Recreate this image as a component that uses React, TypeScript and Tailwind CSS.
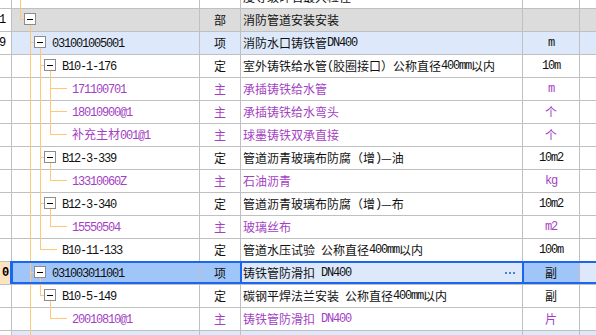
import React from "react";

type Tone = "plain" | "main" | "section" | "item" | "selected";

interface Row {
  num?: string;
  level: number;
  node: "box" | "leaf" | "none";
  guides: number[];
  parentLast?: boolean;
  code?: string;
  kind?: string;
  name?: string;
  unit?: string;
  tone: Tone;
}

const rows: Row[] = [
  { level: -1, node: "none", guides: [-1], name: "度等级碎石最大粒径16mm C30", tone: "plain" },
  { num: "1", level: 0, node: "box", guides: [], parentLast: true, kind: "部", name: "消防管道安装安装", tone: "section" },
  { num: "9", level: 1, node: "box", guides: [], code: "031001005001", kind: "项", name: "消防水口铸铁管DN400", unit: "m", tone: "item" },
  { level: 2, node: "box", guides: [0], code: "B10-1-176", kind: "定", name: "室外铸铁给水管(胶圈接口）公称直径400mm以内", unit: "10m", tone: "plain" },
  { level: 3, node: "leaf", guides: [0, 1], code: "171100701", kind: "主", name: "承插铸铁给水管", unit: "m", tone: "main" },
  { level: 3, node: "leaf", guides: [0, 1], code: "18010900@1", kind: "主", name: "承插铸铁给水弯头", unit: "个", tone: "main" },
  { level: 3, node: "leaf", guides: [0, 1], parentLast: true, code: "补充主材001@1", kind: "主", name: "球墨铸铁双承直接", unit: "个", tone: "main" },
  { level: 2, node: "box", guides: [0], code: "B12-3-339", kind: "定", name: "管道沥青玻璃布防腐（增)—油", unit: "10m2", tone: "plain" },
  { level: 3, node: "leaf", guides: [0, 1], parentLast: true, code: "13310060Z", kind: "主", name: "石油沥青", unit: "kg", tone: "main" },
  { level: 2, node: "box", guides: [0], code: "B12-3-340", kind: "定", name: "管道沥青玻璃布防腐（增)—布", unit: "10m2", tone: "plain" },
  { level: 3, node: "leaf", guides: [0, 1], parentLast: true, code: "15550504", kind: "主", name: "玻璃丝布", unit: "m2", tone: "main" },
  { level: 2, node: "leaf", guides: [0], parentLast: true, code: "B10-11-133", kind: "定", name: "管道水压试验 公称直径400mm以内", unit: "100m", tone: "plain" },
  { num: "0", level: 1, node: "box", guides: [], code: "031003011001", kind: "项", name: "铸铁管防滑扣 DN400", unit: "副", tone: "selected" },
  { level: 2, node: "box", guides: [0], parentLast: true, code: "B10-5-149", kind: "定", name: "碳钢平焊法兰安装 公称直径400mm以内", unit: "副", tone: "plain" },
  { level: 3, node: "leaf", guides: [0], parentLast: true, code: "20010810@1", kind: "主", name: "铸铁管防滑扣 DN400", unit: "片", tone: "main" },
  // next 项 row, only its top edge is on screen
  { level: 1, node: "none", guides: [0], tone: "item" },
];

// ascii runs get a 6px-pitch mono face, like the half-width glyphs of the grid font
function Mixed({ text }: { text: string }) {
  const parts = text.match(/[\x20-\x7e]+|[^\x20-\x7e]+/g) ?? [];
  return (
    <>
      {parts.map((p, i) =>
        /^[\x20-\x7e]+$/.test(p) ? (
          <span key={i} className="font-['Liberation_Mono',monospace] tracking-[-1.2px] whitespace-pre">
            {p}
          </span>
        ) : (
          <span key={i}>{p}</span>
        )
      )}
    </>
  );
}

const guide = "#ffc878";

function TreeLines({ row }: { row: Row }) {
  const L = row.level;
  return (
    <svg className="absolute left-0 top-0" width={188} height={23}>
      {row.guides.map((g) => (
        <line key={g} x1={18.5 + 10 * g} y1={0} x2={18.5 + 10 * g} y2={23} stroke={guide} />
      ))}
      {row.node !== "none" && (
        <>
          <line x1={8.5 + 10 * L} y1={0} x2={8.5 + 10 * L} y2={row.parentLast ? 11 : 23} stroke={guide} />
          <line
            x1={8 + 10 * L}
            y1={10.5}
            x2={row.node === "box" ? 12 + 10 * L : 25 + 10 * L}
            y2={10.5}
            stroke={guide}
          />
        </>
      )}
      {row.node === "box" && (
        <>
          <line x1={18.5 + 10 * L} y1={16} x2={18.5 + 10 * L} y2={23} stroke={guide} />
          <rect x={12.5 + 10 * L} y={4.5} width={11} height={11} fill="#ffffff" stroke="#8c8c8c" />
          <line x1={15 + 10 * L} y1={10.5} x2={21 + 10 * L} y2={10.5} stroke="#000000" />
        </>
      )}
    </svg>
  );
}

const indent = ["pl-[30px]", "pl-[40px]", "pl-[50px]", "pl-[60px]"];

function GridRow({ row }: { row: Row }) {
  const main = row.tone === "main";
  const sel = row.tone === "selected";
  const fill =
    row.tone === "section" ? "bg-[#dcdcdc]" : row.tone === "item" ? "bg-[#dde9fb]" : sel ? "bg-[#a0c6f9]" : "bg-white";
  const light = sel ? "bg-[#dde9fb]" : fill;
  const color = main ? "text-[#a43fc4]" : "text-[#111111]";
  const cell = "h-full border-r border-[#c0c0c0] flex items-center";

  return (
    <div className={`relative flex h-[23px] shrink-0 border-b border-[#c0c0c0] ${color}`}>
      <div
        className={`${cell} w-[12px] justify-end overflow-hidden text-black ${
          sel ? "bg-[#fde4c0] pr-[3px] font-bold" : "bg-white pr-[6px]"
        }`}
      >
        {row.num && <Mixed text={row.num} />}
      </div>
      <div className={`${cell} relative w-[188px] ${fill}`}>
        <TreeLines row={row} />
        {row.code && (
          <span className={`relative ${indent[Math.max(row.level, 0)]}`}>
            <Mixed text={row.code} />
          </span>
        )}
      </div>
      <div className={`${cell} w-[41px] justify-center ${fill}`}>{row.kind}</div>
      <div className={`${cell} w-[282px] pl-[2px] whitespace-nowrap ${light}`}>
        {row.name && <Mixed text={row.name} />}
        {sel && (
          <div className="ml-auto mr-[7px] flex gap-[2px]">
            <div className="h-[2px] w-[2px] bg-[#3f86d6]" />
            <div className="h-[2px] w-[2px] bg-[#3f86d6]" />
            <div className="h-[2px] w-[2px] bg-[#3f86d6]" />
          </div>
        )}
      </div>
      <div className={`${cell} w-[57px] justify-center ${fill}`}>{row.unit && <Mixed text={row.unit} />}</div>
      <div className={`h-full flex-1 ${light}`} />

      {sel && (
        <div className="pointer-events-none absolute left-[10px] right-0 top-[-1px] bottom-0 border-y-2 border-l-[3px] border-[#1a66f0]">
          <div className="absolute left-[227px] top-0 bottom-0 w-[2px] bg-[#1a66f0]" />
          <div className="absolute left-[509px] top-0 bottom-0 w-[2px] bg-[#1a66f0]" />
        </div>
      )}
    </div>
  );
}

export default function App() {
  return (
    <div className="h-[335px] w-[596px] overflow-hidden bg-white font-['Noto_Sans_CJK_SC',sans-serif] text-[12px] leading-[22px]">
      <div className="mt-[-14px] flex flex-col">
        {rows.map((r, i) => (
          <GridRow key={i} row={r} />
        ))}
      </div>
    </div>
  );
}
